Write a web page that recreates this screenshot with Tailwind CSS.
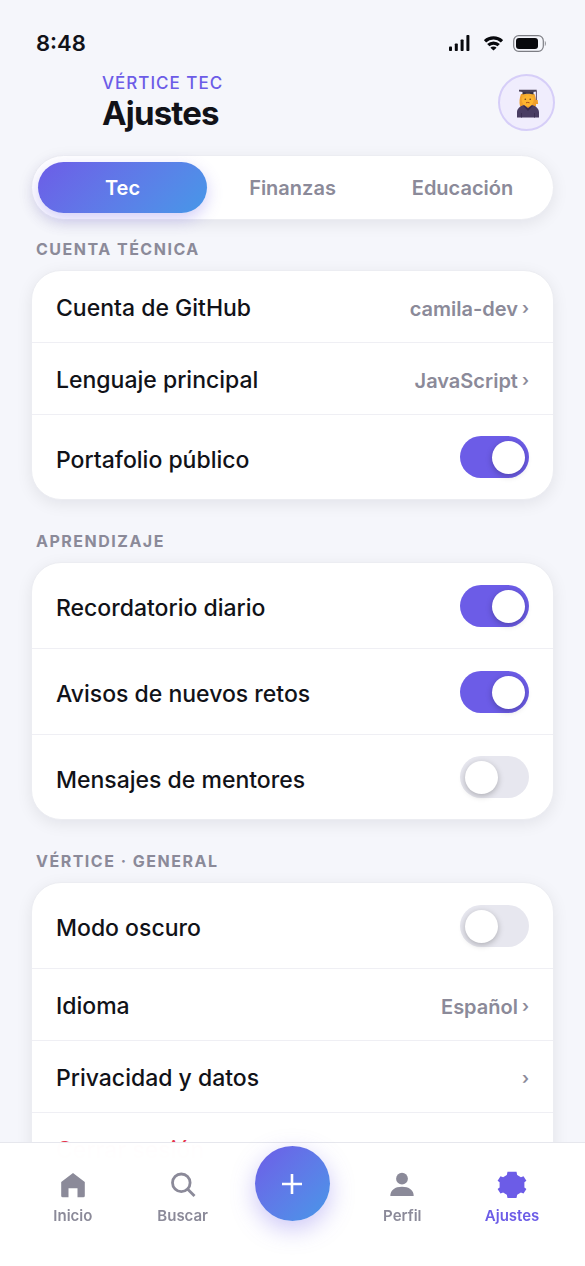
<!DOCTYPE html>
<html lang="es">
<head>
<meta charset="utf-8">
<meta name="viewport" content="width=device-width, initial-scale=1">
<title>Vértice Tec · Ajustes</title>
<script src="https://cdn.jsdelivr.net/npm/@tailwindcss/browser@4"></script>
</head>
<body class="bg-[#f5f6fb] font-['Inter','Liberation_Sans',sans-serif] text-[#111218] antialiased">
<div class="relative flex h-dvh flex-col overflow-hidden">

  <div class="flex h-[70px] shrink-0 items-center justify-between pt-4 pr-[38px] pl-9">
    <time class="text-[22px] font-semibold">8:48</time>
    <div class="flex items-center gap-[10px]">
      <svg class="mr-1 h-4 w-[21px]" viewBox="0 0 21 16" fill="#08090d" aria-hidden="true">
        <rect x="0" y="11.5" width="3" height="4.5" rx=".8"/><rect x="5.8" y="8.5" width="3" height="7.5" rx=".8"/><rect x="11.6" y="4.5" width="3" height="11.5" rx=".8"/><rect x="17.4" y="0" width="3" height="16" rx=".8"/>
      </svg>
      <svg class="h-[15px] w-[19px]" viewBox="0 0 19 15" fill="none" stroke="#08090d" stroke-width="3.300" aria-hidden="true">
        <path d="M1 5.3a12.2 12.2 0 0 1 17 0"/><path d="M4.3 9.200a7.4 7.4 0 0 1 10.4 0"/><path d="M9.5 14.6 6.4 11.700a4.4 4.4 0 0 1 6.200 0z" fill="#08090d" stroke="none"/>
      </svg>
      <svg class="h-[17px] w-[34px]" viewBox="0 0 34 17" aria-hidden="true">
        <rect x=".7" y=".7" width="29.6" height="15.6" rx="5" fill="none" stroke="#7c7d83" stroke-width="1.2"/><rect x="3" y="3" width="22" height="11" rx="3" fill="#08090d"/><path d="M31.8 6v5c1.6-.6 1.6-4.4 0-5z" fill="#9a9ba1"/>
      </svg>
    </div>
  </div>

  <header class="flex shrink-0 items-center justify-between pr-[30px] pl-[102px]">
    <div>
      <p class="text-[17px] leading-6 font-medium tracking-[1px] text-[#6c5ce7]">VÉRTICE TEC</p>
      <h1 class="text-[33px] leading-9 font-bold tracking-tight">Ajustes</h1>
    </div>
    <button type="button" aria-label="Perfil de Camila" class="mt-1 grid size-[57px] place-items-center rounded-full border-2 border-[#d6cef8] bg-[#f0edfd] pt-px pl-[3px]">
      <svg class="h-[29px] w-6" viewBox="0 0 24 29" aria-hidden="true">
        <path d="M5 5C3.500 9 3 13 4 17c2 3 14 3 16 0 .5-4 0-8-1.500-12z" fill="#f0a02c"/>
        <ellipse cx="11.700" cy="11" rx="6" ry="6.300" fill="#fdb52f"/>
        <path d="M5.500 9c2-.5 4-1.500 6-3.500 2 2 4 3 6.500 3.500l-1-4.500H6.500z" fill="#f5ac30"/>
        <circle cx="9.300" cy="10.200" r=".8" fill="#6b4120"/><circle cx="14.200" cy="10.200" r=".8" fill="#6b4120"/>
        <path d="M10 13.800q1.700-.8 3.500 0" stroke="#a5501a" stroke-width="1" fill="none"/>
        <path d="M1 28.500v-5c0-4 3-6.500 7-7.500l4 3 4-3c4 1 7 3.500 7 7.500v5z" fill="#493d63"/>
        <path d="m8 16.500 4 3 4-3 .6.400-4.600 5-4.600-5z" fill="#35294b"/>
        <path d="M5.500 28.500V24m13 4.500V24" stroke="#3a2f52"/>
        <path d="M6.500 2.500h11v3c-3-1-8-1-11 0z" fill="#373040"/><path d="M3 .8h17.700v1.700l-9 1.300L3 2.500z" fill="#4a4258"/>
        <path d="M20.400 2v10" stroke="#5c4d68"/><path d="M19.300 11h2.400l.4 4h-3.200z" fill="#ef9f2b"/>
      </svg>
    </button>
  </header>

  <main class="flex-1 overflow-y-auto px-[31px] pt-6 pb-[140px] [scrollbar-width:none]">
    <div role="tablist" class="grid grid-cols-3 gap-px rounded-full border border-[#ecedf2] bg-white p-[6px] text-[20px] font-semibold text-[#8b8a99] shadow-[0_4px_16px_rgba(17,18,24,0.08)]">
      <button role="tab" aria-selected="true" type="button" class="h-[51px] rounded-full bg-linear-135 from-[#6c5ce7] to-[#4597e8] text-white shadow-[0_6px_16px_rgba(108,92,231,0.3)]">Tec</button>
      <button role="tab" aria-selected="false" type="button" class="h-[51px] rounded-full">Finanzas</button>
      <button role="tab" aria-selected="false" type="button" class="h-[51px] rounded-full">Educación</button>
    </div>

    <section>
      <h2 class="pt-[17px] pb-[9px] pl-[5px] text-[16px] leading-6 font-bold tracking-[1.500px] text-[#8b8a99]">CUENTA TÉCNICA</h2>
      <div class="divide-y divide-[#efeff4] rounded-[30px] border border-[#ecedf2] bg-white text-[23px] font-medium shadow-[0_4px_16px_rgba(17,18,24,0.08)]">
        <button type="button" class="flex h-[72px] w-full items-center justify-between px-6 pt-1"><span>Cuenta de GitHub</span><span class="flex items-center gap-1 text-[20px] font-semibold text-[#8b8a99]">camila-dev <span class="text-[17px]">›</span></span></button>
        <button type="button" class="flex h-[72px] w-full items-center justify-between px-6 pt-1"><span>Lenguaje principal</span><span class="flex items-center gap-1 text-[20px] font-semibold text-[#8b8a99]">JavaScript <span class="text-[17px]">›</span></span></button>
        <label class="flex h-[84px] items-center justify-between px-6"><span class="pt-[6px]">Portafolio público</span><input type="checkbox" role="switch" checked class="relative h-[42px] w-[69px] appearance-none rounded-full bg-[#e7e7ef] before:absolute before:top-[5px] before:left-[5px] before:size-[33px] before:rounded-full before:bg-white before:shadow-[0_2px_6px_rgba(0,0,0,0.25)] checked:bg-[#6c5ce7] checked:before:left-8"></label>
      </div>
    </section>

    <section class="pt-2">
      <h2 class="pt-[21px] pb-[9px] pl-[5px] text-[16px] leading-6 font-bold tracking-[1.500px] text-[#8b8a99]">APRENDIZAJE</h2>
      <div class="divide-y divide-[#efeff4] rounded-[30px] border border-[#ecedf2] bg-white text-[23px] font-medium shadow-[0_4px_16px_rgba(17,18,24,0.08)]">
        <label class="flex h-[86px] items-center justify-between px-6"><span class="pt-[6px]">Recordatorio diario</span><input type="checkbox" role="switch" checked class="relative h-[42px] w-[69px] appearance-none rounded-full bg-[#e7e7ef] before:absolute before:top-[5px] before:left-[5px] before:size-[33px] before:rounded-full before:bg-white before:shadow-[0_2px_6px_rgba(0,0,0,0.25)] checked:bg-[#6c5ce7] checked:before:left-8"></label>
        <label class="flex h-[86px] items-center justify-between px-6"><span class="pt-[6px]">Avisos de nuevos retos</span><input type="checkbox" role="switch" checked class="relative h-[42px] w-[69px] appearance-none rounded-full bg-[#e7e7ef] before:absolute before:top-[5px] before:left-[5px] before:size-[33px] before:rounded-full before:bg-white before:shadow-[0_2px_6px_rgba(0,0,0,0.25)] checked:bg-[#6c5ce7] checked:before:left-8"></label>
        <label class="flex h-[84px] items-center justify-between px-6"><span class="pt-[6px]">Mensajes de mentores</span><input type="checkbox" role="switch" class="relative h-[42px] w-[69px] appearance-none rounded-full bg-[#e7e7ef] before:absolute before:top-[5px] before:left-[5px] before:size-[33px] before:rounded-full before:bg-white before:shadow-[0_2px_6px_rgba(0,0,0,0.25)] checked:bg-[#6c5ce7] checked:before:left-8"></label>
      </div>
    </section>

    <section class="pt-2">
      <h2 class="pt-[21px] pb-[9px] pl-[5px] text-[16px] leading-6 font-bold tracking-[1.500px] text-[#8b8a99]">VÉRTICE · GENERAL</h2>
      <div class="divide-y divide-[#efeff4] rounded-[30px] border border-[#ecedf2] bg-white text-[23px] font-medium shadow-[0_4px_16px_rgba(17,18,24,0.08)]">
        <label class="flex h-[86px] items-center justify-between px-6"><span class="pt-[6px]">Modo oscuro</span><input type="checkbox" role="switch" class="relative h-[42px] w-[69px] appearance-none rounded-full bg-[#e7e7ef] before:absolute before:top-[5px] before:left-[5px] before:size-[33px] before:rounded-full before:bg-white before:shadow-[0_2px_6px_rgba(0,0,0,0.25)] checked:bg-[#6c5ce7] checked:before:left-8"></label>
        <button type="button" class="flex h-[72px] w-full items-center justify-between px-6 pt-1"><span>Idioma</span><span class="flex items-center gap-1 text-[20px] font-semibold text-[#8b8a99]">Español <span class="text-[17px]">›</span></span></button>
        <button type="button" class="flex h-[72px] w-full items-center justify-between px-6 pt-1"><span>Privacidad y datos</span><span class="text-[17px] font-semibold text-[#8b8a99]">›</span></button>
        <button type="button" class="flex h-[72px] w-full items-center px-6 pt-[2px] text-[#e5344d]">Cerrar sesión</button>
      </div>
    </section>
  </main>

  <nav class="absolute inset-x-0 bottom-0 grid h-[124px] grid-cols-5 items-start border-t border-[#e6e7ed] bg-white/98 px-[18px] text-[15px] leading-5 font-semibold text-[#8b8a99] backdrop-blur-xl">
    <a href="#inicio" class="flex flex-col items-center gap-[7px] pt-7">
      <svg class="size-7" viewBox="0 0 28 28" fill="currentColor" aria-hidden="true"><path d="M14 2 25.800 11v13.800a1.500 1.500 0 0 1-1.500 1.500h-5.800V17.200h-9v9.100H3.700a1.500 1.500 0 0 1-1.500-1.500V11z"/></svg>
      Inicio</a>
    <a href="#buscar" class="flex flex-col items-center gap-[7px] pt-7">
      <svg class="size-7" viewBox="0 0 28 28" fill="none" stroke="currentColor" stroke-width="2.800" aria-hidden="true"><circle cx="12.300" cy="11.800" r="8.800"/><path d="m18.500 18 7 7"/></svg>
      Buscar</a>
    <button type="button" aria-label="Añadir" class="mt-[3px] grid size-[75px] place-items-center justify-self-center rounded-full bg-linear-135 from-[#6c5ce7] to-[#4597e8] text-white shadow-[0_8px_24px_rgba(108,92,231,0.35)]">
      <svg class="size-6" viewBox="0 0 24 24" fill="none" stroke="currentColor" stroke-width="2.600" aria-hidden="true"><path d="M12 2v20M2 12h20"/></svg>
    </button>
    <a href="#perfil" class="flex flex-col items-center gap-[7px] pt-7">
      <svg class="size-7" viewBox="0 0 28 28" fill="currentColor" aria-hidden="true"><circle cx="14" cy="7.700" r="5.900"/><path d="M2.300 25c0-6 4.700-9.300 11.700-9.300s11.700 3.300 11.700 9.300z"/></svg>
      Perfil</a>
    <a href="#ajustes" aria-current="page" class="flex flex-col items-center gap-[7px] pt-7 text-[#6c5ce7]">
      <svg class="h-7 w-[30px]" viewBox="0 0 30 28" fill="currentColor" aria-hidden="true"><path d="M10.500.8h9l.7 3.300 3.700 2.200 2.600-1.100 2.900 4.600-2 1.500v5.200l2 1.500-2.900 4.600-2.600-1.100-3.700 2.200-.7 3.200h-9l-.7-3.200-3.700-2.200-2.600 1.100L.6 18l2-1.500v-5.200l-2-1.500 2.900-4.600 2.600 1.100 3.700-2.200z"/></svg>
      Ajustes</a>
  </nav>
</div>
</body>
</html>
